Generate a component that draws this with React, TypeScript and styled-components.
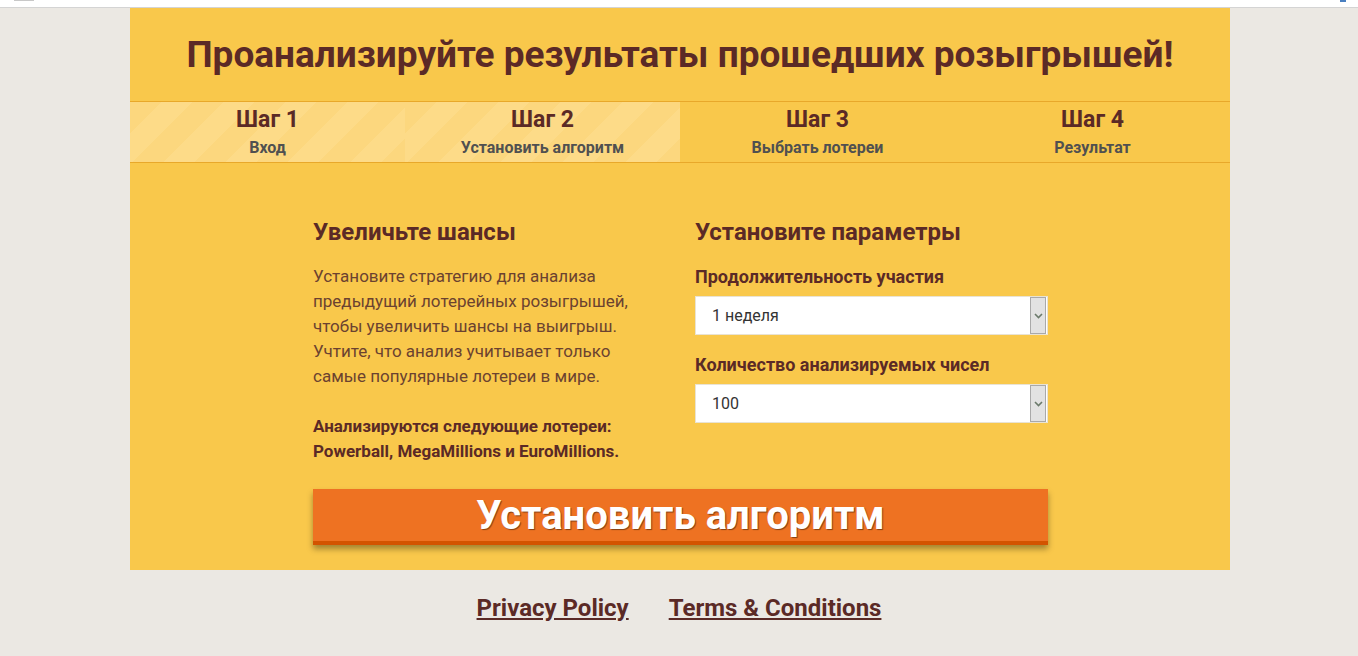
import styled, { createGlobalStyle } from "styled-components";

const GlobalStyle = createGlobalStyle`
  html, body {
    margin: 0;
    padding: 0;
    background: #ebe8e3;
    font-family: Roboto, "Liberation Sans", sans-serif;
  }
`;

const steps = [
  { title: "Шаг 1", sub: "Вход", done: true },
  { title: "Шаг 2", sub: "Установить алгоритм", done: true },
  { title: "Шаг 3", sub: "Выбрать лотереи", done: false },
  { title: "Шаг 4", sub: "Результат", done: false },
];

const Chevron = () => (
  <svg width="9" height="6" viewBox="0 0 9 6">
    <path d="M1 1 L4.5 4.5 L8 1" fill="none" stroke="#6b7a6b" strokeWidth="1.6" />
  </svg>
);

const App = () => {
  return (
    <>
      <GlobalStyle />
      <TopBar>
        <TopLeftMark />
        <TopRightMark />
      </TopBar>
      <Card>
        <TitleBlock>
          <Title>Проанализируйте результаты прошедших розыгрышей!</Title>
        </TitleBlock>
        <Steps>
          {steps.map((s) => (
            <Step key={s.title} done={s.done}>
              <StepTitle>{s.title}</StepTitle>
              <StepSub>{s.sub}</StepSub>
            </Step>
          ))}
        </Steps>
        <Content>
          <Columns>
            <Column>
              <Heading>Увеличьте шансы</Heading>
              <Para>
                Установите стратегию для анализа предыдущий лотерейных
                розыгрышей, чтобы увеличить шансы на выигрыш. Учтите, что
                анализ учитывает только самые популярные лотереи в мире.
              </Para>
              <BoldPara>
                Анализируются следующие лотереи: Powerball, MegaMillions и
                EuroMillions.
              </BoldPara>
            </Column>
            <Column>
              <Heading>Установите параметры</Heading>
              <Label>Продолжительность участия</Label>
              <Select>
                <SelectValue>1 неделя</SelectValue>
                <SelectArrow>
                  <Chevron />
                </SelectArrow>
              </Select>
              <Label>Количество анализируемых чисел</Label>
              <Select>
                <SelectValue>100</SelectValue>
                <SelectArrow>
                  <Chevron />
                </SelectArrow>
              </Select>
            </Column>
          </Columns>
          <Button>Установить алгоритм</Button>
        </Content>
      </Card>
      <Footer>
        <FooterLink href="#">Privacy Policy</FooterLink>
        <FooterLink href="#">Terms &amp; Conditions</FooterLink>
      </Footer>
    </>
  );
};

export default App;

const TopBar = styled.div`
  position: relative;
  height: 7px;
  background: #ffffff;
  border-bottom: 1px solid #d4d4d4;
`;

const TopLeftMark = styled.div`
  position: absolute;
  left: 14px;
  top: 0;
  width: 20px;
  height: 1px;
  background: #c8c8c8;
`;

const TopRightMark = styled.div`
  position: absolute;
  right: 12px;
  top: 0;
  width: 6px;
  height: 2px;
  background: #4a7fc0;
`;

const Card = styled.div`
  width: 1100px;
  margin: -1px 0 0 calc(50% - 549px);
  background: #f9c84b;
  border-top: 1px solid #e6b13c;
`;

const TitleBlock = styled.div`
  height: 93px;
  display: flex;
  align-items: center;
  justify-content: center;
`;

const Title = styled.h1`
  margin: 0;
  font-size: 37px;
  font-weight: 700;
  color: #5b2a26;
`;

const Steps = styled.div`
  display: grid;
  grid-template-columns: repeat(4, 1fr);
  border-top: 1px solid #e8a82a;
  border-bottom: 1px solid #e8a82a;
`;

const Step = styled.div<{ done?: boolean }>`
  height: 60px;
  display: flex;
  flex-direction: column;
  align-items: center;
  background: ${({ done }) =>
    done
      ? "repeating-linear-gradient(135deg, #fcd77e 0px, #fcd77e 22px, #fddb88 22px, #fddb88 44px)"
      : "transparent"};
`;

const StepTitle = styled.div`
  font-size: 23px;
  font-weight: 700;
  color: #5b2a26;
  line-height: 28px;
  padding-top: 4px;
`;

const StepSub = styled.div`
  font-size: 16px;
  font-weight: 700;
  color: #505050;
  line-height: 22px;
  margin-top: 3px;
`;

const Content = styled.div`
  padding: 54px 182px 25px 183px;
`;

const Columns = styled.div`
  display: grid;
  grid-template-columns: 1fr 353px;
  column-gap: 40px;
`;

const Column = styled.div`
  display: flex;
  flex-direction: column;
`;

const Heading = styled.h2`
  margin: 0;
  font-size: 24px;
  font-weight: 700;
  line-height: 30px;
  color: #5b2a26;
`;

const Para = styled.p`
  margin: 17px 0 0;
  font-size: 17px;
  line-height: 25px;
  color: #6b4230;
`;

const BoldPara = styled.p`
  margin: 25px 0 0;
  font-size: 17px;
  font-weight: 700;
  line-height: 25px;
  color: #5b2a26;
`;

const Label = styled.div`
  margin-top: 18px;
  font-size: 18px;
  font-weight: 700;
  line-height: 24px;
  color: #5b2a26;

  & + div {
    margin-top: 7px;
  }
`;

const Select = styled.div`
  height: 39px;
  background: #ffffff;
  border: 1px solid #e9e3d3;
  box-sizing: border-box;
  display: flex;
  align-items: center;
  justify-content: space-between;
`;

const SelectValue = styled.span`
  padding-left: 16px;
  font-size: 16px;
  color: #333333;
`;

const SelectArrow = styled.div`
  width: 14px;
  height: 35px;
  margin-right: 1px;
  background: #e2e2e2;
  border: 1px solid #a9a9a9;
  display: flex;
  align-items: center;
  justify-content: center;
`;

const Button = styled.button`
  display: block;
  width: 100%;
  height: 56px;
  margin-top: 25px;
  padding: 0;
  border: none;
  border-bottom: 4px solid #d35400;
  background: #ee7222;
  color: #ffffff;
  font-family: Roboto, "Liberation Sans", sans-serif;
  font-size: 40px;
  font-weight: 700;
  text-shadow: 1px 1px 1px rgba(0, 0, 0, 0.45);
  box-shadow: 0 4px 6px rgba(0, 0, 0, 0.35);
  cursor: pointer;
`;

const Footer = styled.div`
  display: flex;
  justify-content: center;
  gap: 40px;
  padding-top: 23px;
`;

const FooterLink = styled.a`
  font-size: 24px;
  font-weight: 700;
  color: #5b2a26;
  text-decoration: underline;
  line-height: 30px;
`;
